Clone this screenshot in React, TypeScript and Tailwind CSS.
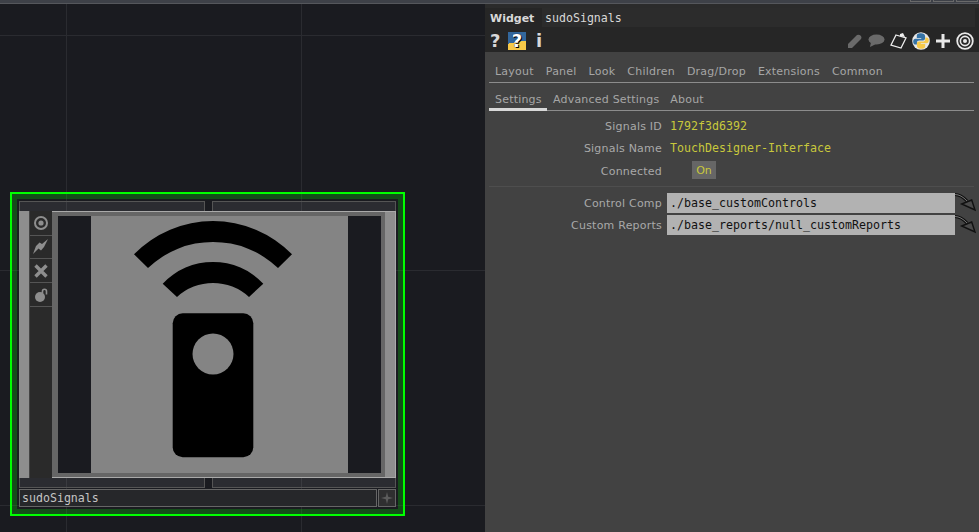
import React from 'react';

const sans = "font-['DejaVu_Sans',sans-serif]";
const mono = "font-['DejaVu_Sans_Mono',monospace]";

const topTabs = ['Layout', 'Panel', 'Look', 'Children', 'Drag/Drop', 'Extensions', 'Common'];

function Remote() {
  return (
    <svg viewBox="0 0 257 257" className="h-[257px] w-[257px]">
      <path d="M43 38.3 A110.4 110.4 0 0 1 201 38.3 L187 52 A94 94 0 0 0 57 52 Z" fill="#000" />
      <path d="M71.7 67.7 A69 69 0 0 1 172.3 67.7 L158 81 A53 53 0 0 0 86 81 Z" fill="#000" />
      <rect x="81.7" y="97.3" width="80.6" height="144" rx="10" fill="#000" />
      <circle cx="122" cy="138" r="20.5" fill="#848484" />
    </svg>
  );
}

function SideButton({ children, height }: { children: React.ReactNode; height: string }) {
  return (
    <div className={`flex w-[22px] items-center justify-center border-b border-[#555] text-[#8e8e8e] ${height}`}>
      {children}
    </div>
  );
}

function Node() {
  return (
    <div className="h-[324px] w-[395px] border-2 border-[#00ff00]">
      <div className="flex h-full flex-col border-[5px] border-[rgba(0,255,0,0.22)] px-[2px] pt-[2px]">
        {/* top connector strips */}
        <div className="flex h-[10px] justify-between">
          <div className="w-[186px] border border-b-0 border-[#555] bg-white/[0.08]" />
          <div className="w-[184px] border border-b-0 border-[#555] bg-white/[0.08]" />
        </div>

        <div className="flex h-[267px]">
          <div className="w-[10px] bg-[#8e8e8e]" />
          <div className="w-[1px] bg-[#444]" />
          <div className="flex w-[22px] flex-col bg-[#2a2a2a]">
            <SideButton height="h-[25px]">
              <svg viewBox="0 0 14 14" className="h-[14px] w-[14px]">
                <circle cx="7" cy="7" r="6" fill="none" stroke="currentColor" strokeWidth="2" />
                <circle cx="7" cy="7" r="2.6" fill="currentColor" />
              </svg>
            </SideButton>
            <SideButton height="h-[23px]">
              <svg viewBox="0 0 16 16" className="h-[16px] w-[16px]">
                <path d="M15 0 L9 5 L6.5 3.5 L3 7 L0 15 L5.5 9.5 L8 11.5 L11 8 Z" fill="currentColor" />
              </svg>
            </SideButton>
            <SideButton height="h-[24px]">
              <svg viewBox="0 0 14 14" className="h-[14px] w-[14px]">
                <path d="M1.5 1.5 L12.5 12.5 M12.5 1.5 L1.5 12.5" stroke="currentColor" strokeWidth="3.4" />
              </svg>
            </SideButton>
            <SideButton height="h-[24px]">
              <svg viewBox="0 0 14 14" className="h-[14px] w-[14px]">
                <circle cx="6" cy="9" r="5" fill="currentColor" />
                <path d="M8.5 5 V3.2 A2 2 0 0 1 12.5 3.2 V6.5" fill="none" stroke="currentColor" strokeWidth="1.6" />
              </svg>
            </SideButton>
          </div>
          <div className="flex flex-1 border border-l-0 border-[#aaa] bg-[#666] py-[4px] pl-[6px]">
            <div className="flex h-[257px] w-[323px] bg-[#1a1b20]">
              <div className="w-[33px]" />
              <div className="h-[257px] w-[257px] bg-[#848484]">
                <Remote />
              </div>
            </div>
            <div className="ml-[4px] -my-[4px] flex-1 bg-[#8e8e8e]" />
          </div>
        </div>

        {/* bottom connector strips */}
        <div className="flex h-[10px] justify-between">
          <div className="w-[186px] border border-t-0 border-[#555] bg-white/[0.08]" />
          <div className="w-[184px] border border-t-0 border-[#555] bg-white/[0.08]" />
        </div>

        <div className="mt-[1px] flex h-[18px] gap-[1px]">
          <div className={`flex flex-1 items-center border border-[#666] bg-[#26272a] pl-[2px] pt-[2px] text-[11.6px] text-[#c4c4c4] ${mono}`}>
            sudoSignals
          </div>
          <div className="flex w-[18px] items-center justify-center border border-[#666] bg-[#2f2f30]">
            <svg viewBox="0 0 12 12" className="h-[12px] w-[12px] text-[#5c5c5c]">
              <path d="M6 0 L7.2 4.8 L12 6 L7.2 7.2 L6 12 L4.8 7.2 L0 6 L4.8 4.8 Z" fill="currentColor" />
            </svg>
          </div>
        </div>
      </div>
    </div>
  );
}

function ParamLabel({ children }: { children: React.ReactNode }) {
  return <div className="w-[178px] shrink-0 pr-[1px] pt-[2px] text-right text-[11px] tracking-[0.22px] text-[#a9a9a9]">{children}</div>;
}

function ParamText({ label, value }: { label: string; value: string }) {
  return (
    <div className="flex h-[22px] items-center">
      <ParamLabel>{label}</ParamLabel>
      <div className={`ml-[7px] pt-[2px] text-[11.63px] text-[#c8c83c] ${mono}`}>{value}</div>
    </div>
  );
}

function ReferenceArrow() {
  return (
    <svg viewBox="0 0 21 20" className="h-[20px] w-[21px] shrink-0">
      <path d="M0 1.5 Q6 1.5 12 8" fill="none" stroke="#111" strokeWidth="3" />
      <path d="M0 1.5 Q6 1.5 12 8" fill="none" stroke="#777" strokeWidth="1" />
      <path d="M6.7 11 L16.7 7 L20 17 Z" fill="#4a4a4a" stroke="#111" strokeWidth="1.4" />
    </svg>
  );
}

function ParamPath({ label, value }: { label: string; value: string }) {
  return (
    <div className="flex h-[20px] items-center">
      <ParamLabel>{label}</ParamLabel>
      <div className={`ml-[4px] flex h-[20px] w-[288px] items-center bg-[#b2b2b2] pl-[3px] pt-[2px] text-[11.63px] text-[#111] ${mono}`}>
        {value}
      </div>
      <ReferenceArrow />
    </div>
  );
}

function Header() {
  return (
    <div className="h-[48px] bg-[#262626]">
      <div className="h-[4px] bg-[#2b2b2b]" />
      <div className="flex h-[19px] items-center">
        <div className={`w-[57px] pl-[5px] pt-[4px] text-[11px] font-bold text-[#d8d8d8] ${sans}`}>Widget</div>
        <div className={`flex h-[19px] w-[433px] items-center bg-[#2c2c2c] pl-[3px] pt-[2px] text-[11.6px] text-[#d8d8d8] ${mono}`}>
          sudoSignals
        </div>
      </div>
      <div className="flex h-[25px] items-center justify-between pl-[5px] pr-[5px] pt-[2px]">
        <div className={`flex items-center gap-[7px] text-[18px] font-bold text-[#d8d8d8] ${sans}`}>
          <span className="w-[11px]">?</span>
          <span className="flex h-[18px] w-[18px] items-center justify-center bg-[linear-gradient(170deg,#33679c_55%,#f7c948_55%)] text-white [text-shadow:0_0_1px_#000,1px_1px_0_#000]">
            ?
          </span>
          <span className="ml-[3px] w-[6px]">i</span>
        </div>
        <div className="flex items-center gap-[4px]">
          {/* pencil */}
          <svg viewBox="0 0 16 16" className="h-[16px] w-[16px]">
            <path d="M1 15 V11 L10 2 Q12 1 14 3 Q15 5 14 6 L5 15 Z" fill="#6a6a6a" />
          </svg>
          {/* comment */}
          <svg viewBox="0 0 18 14" className="h-[14px] w-[18px]">
            <ellipse cx="9.5" cy="5.5" rx="8" ry="5" fill="#6a6a6a" />
            <path d="M4 8 L3 13 L9 10 Z" fill="#6a6a6a" />
          </svg>
          {/* clipboard */}
          <svg viewBox="0 0 18 18" className="ml-[1px] h-[18px] w-[18px]">
            <path d="M6 3 L16 6 L11 16 L1 13 Z" fill="#262626" stroke="#eee" strokeWidth="1.3" />
            <path d="M10 2 L13 1 L15 5 L10 4 Z" fill="#eee" />
          </svg>
          {/* python */}
          <svg viewBox="0 0 18 18" className="h-[18px] w-[18px]">
            <circle cx="9" cy="9" r="8.8" fill="#e8e8e8" />
            <g transform="translate(9 9) scale(1.2) translate(-9 -9)">
              <path d="M9 2.5 C6 2.5 5.5 3.5 5.5 5 V6.5 H9.2 V7.2 H4.3 C3 7.2 2.5 8.4 2.5 9.6 C2.5 11 3.2 12 4.4 12 H5.6 V10.4 C5.6 9.2 6.4 8.5 7.6 8.5 H10.6 C11.8 8.5 12.4 7.8 12.4 6.8 V5 C12.4 3.4 11.2 2.5 9 2.5 Z" fill="#3572a5" />
              <path d="M9 15.5 C12 15.5 12.5 14.5 12.5 13 V11.5 H8.8 V10.8 H13.7 C15 10.8 15.5 9.6 15.5 8.4 C15.5 7 14.8 6 13.6 6 H12.6 V7.6 C12.6 8.8 11.6 9.5 10.4 9.5 H7.4 C6.2 9.5 5.6 10.2 5.6 11.2 V13 C5.6 14.6 6.8 15.5 9 15.5 Z" fill="#f7c948" />
            </g>
          </svg>
          {/* plus */}
          <svg viewBox="0 0 14 14" className="ml-[2px] h-[14px] w-[14px]">
            <path d="M7 0 V14 M0 7 H14" stroke="#e8e8e8" strokeWidth="3" />
          </svg>
          {/* viewer */}
          <svg viewBox="0 0 18 18" className="ml-[2px] h-[18px] w-[18px]">
            <circle cx="9" cy="9" r="7.8" fill="none" stroke="#e8e8e8" strokeWidth="1.8" />
            <circle cx="9" cy="9" r="4.6" fill="none" stroke="#e8e8e8" strokeWidth="1.6" />
            <circle cx="9" cy="9" r="2" fill="#e8e8e8" />
          </svg>
        </div>
      </div>
    </div>
  );
}

function Inspector() {
  return (
    <div className={`flex w-[494px] flex-col bg-[#424242] ${sans}`}>
      <Header />

      <div className="ml-[4px] mr-[5px] mt-[11px] flex h-[20px] items-start gap-[12px] border-b border-[#8c8c8c] pl-[6px] pt-[1px] text-[11px] tracking-[0.23px] text-[#a6a6a6]">
        {topTabs.map((t) => (
          <span key={t}>{t}</span>
        ))}
      </div>
      <div className="ml-[4px] mr-[5px] mt-[8px] flex h-[20px] items-start border-b border-[#8c8c8c] text-[11px] tracking-[0.2px] text-[#a6a6a6]">
        <span className="h-[20px] w-[58px] border-b-[3px] border-[#d8d8d8] pl-[6px] pt-[1px]">Settings</span>
        <span className="ml-[6px] pt-[1px]">Advanced Settings</span>
        <span className="ml-[11px] pt-[1px]">About</span>
      </div>

      <div className="mt-[4px]">
        <ParamText label="Signals ID" value="1792f3d6392" />
        <ParamText label="Signals Name" value="TouchDesigner-Interface" />
        <div className="flex h-[22px] items-center">
          <div className="pt-[2px]">
            <ParamLabel>Connected</ParamLabel>
          </div>
          <div className="ml-[29px] flex h-[18px] w-[24px] items-center justify-center bg-[#666] pt-[2px] text-[11px] text-[#c8c83c]">On</div>
        </div>
      </div>

      <div className="ml-[4px] mr-[5px] mt-[5px] border-t border-[#4e4e4e]" />

      <div className="mt-[6px] flex flex-col gap-[2px]">
        <ParamPath label="Control Comp" value="./base_customControls" />
        <ParamPath label="Custom Reports" value="./base_reports/null_customReports" />
      </div>
    </div>
  );
}

export default function App() {
  return (
    <div className="flex h-[532px] w-[979px] flex-col overflow-hidden bg-[#1a1b20]">
      {/* title strip */}
      <div className="flex h-[4px] justify-end gap-[2px] border-b border-[#55575c] bg-[#3e4148] pr-[1px]">
        <div className="h-[2px] w-[21px] border-x border-b border-[#6a6a6a]" />
        <div className="h-[2px] w-[21px] border-x border-b border-[#6a6a6a]" />
        <div className="h-[2px] w-[22px] border-x border-b border-[#6a6a6a]" />
      </div>
      <div className="flex h-[528px]">
        {/* network canvas */}
        <div className="h-full w-[485px] bg-[linear-gradient(#2a2b30_1px,transparent_1px),linear-gradient(90deg,#2a2b30_1px,transparent_1px)] bg-[size:235px_235px] bg-[position:66px_31px] pl-[10px] pt-[188px]">
          <Node />
        </div>
        <Inspector />
      </div>
    </div>
  );
}
